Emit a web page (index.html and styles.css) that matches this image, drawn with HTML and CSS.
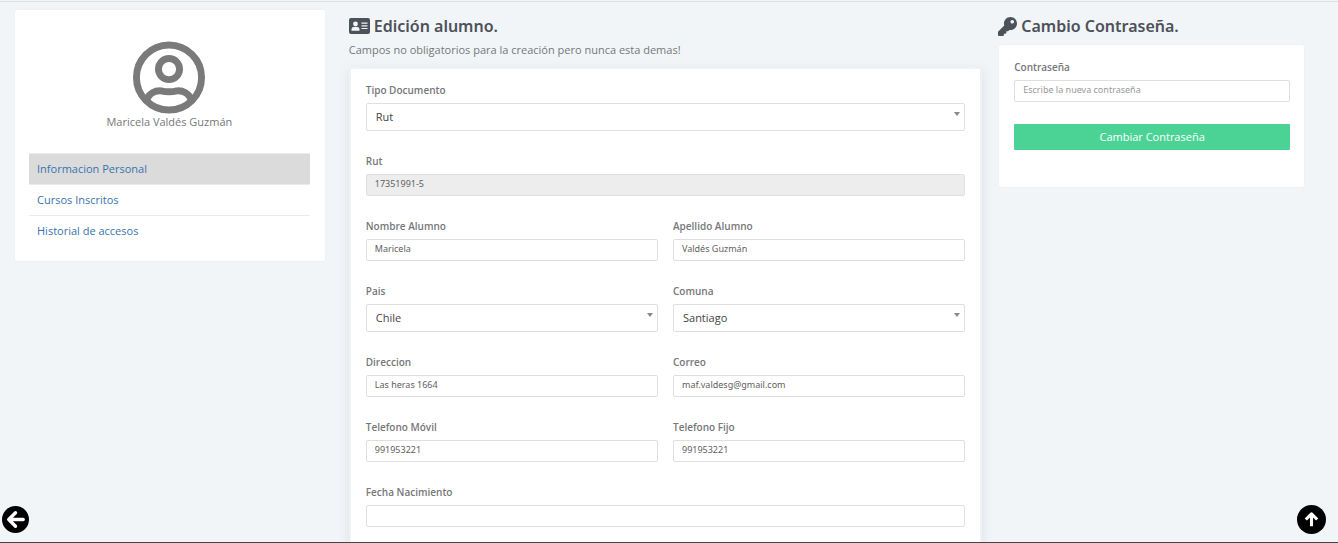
FILE: index.html
```html
<!DOCTYPE html>
<html lang="es">
<head>
<meta charset="utf-8">
<meta name="viewport" content="width=device-width, initial-scale=1">
<title>Edición alumno</title>
<link rel="stylesheet" href="styles.css">
</head>
<body>
<div class="topline"></div>
<main class="layout">
  <aside class="panel profile">
    <svg class="avatar" viewBox="0 0 74 74" fill="none" stroke="#7a7a7a" stroke-width="7" aria-hidden="true">
      <circle cx="37" cy="37" r="33"/>
      <circle cx="37" cy="28.500" r="10.700"/>
      <path d="M14 60C17 53 23 50 29 50.500C33 51.500 41 51.500 45 50.500C51 50 57 53 60 60"/>
    </svg>
    <p class="name">Maricela Valdés Guzmán</p>
    <nav class="menu">
      <a class="menu-item active" href="#">Informacion Personal</a>
      <a class="menu-item" href="#">Cursos Inscritos</a>
      <a class="menu-item" href="#">Historial de accesos</a>
    </nav>
  </aside>

  <section class="edit">
    <h1 class="title">
      <svg class="icon-card" viewBox="0 0 21 16" aria-hidden="true">
        <path fill="#4d5158" d="M2 0H19Q21 0 21 2V14Q21 16 19 16H2Q0 16 0 14V2Q0 0 2 0Z"/>
        <g fill="#f1f5f8"><circle cx="6.500" cy="6" r="2.400"/><path d="M2.500 12.700V11.300Q2.500 9 4.800 9H8.200Q10.500 9 10.500 11.300V12.700ZM12.500 4.500H18.500V5.700H12.500ZM12.500 7.200H18.500V8.400H12.500ZM12.500 9.900H18.500V11.100H12.500Z"/></g>
      </svg>
      Edición alumno.
    </h1>
    <p class="subtitle">Campos no obligatorios para la creación pero nunca esta demas!</p>
    <form class="panel form">
      <div class="field wide">
        <label for="tipo">Tipo Documento</label>
        <div class="select"><select id="tipo"><option>Rut</option></select></div>
      </div>
      <div class="field wide">
        <label for="rut">Rut</label>
        <input id="rut" type="text" value="17351991-5" readonly>
      </div>
      <div class="field">
        <label for="nombre">Nombre Alumno</label>
        <input id="nombre" type="text" value="Maricela">
      </div>
      <div class="field">
        <label for="apellido">Apellido Alumno</label>
        <input id="apellido" type="text" value="Valdés Guzmán">
      </div>
      <div class="field">
        <label for="pais">Pais</label>
        <div class="select"><select id="pais"><option>Chile</option></select></div>
      </div>
      <div class="field">
        <label for="comuna">Comuna</label>
        <div class="select"><select id="comuna"><option>Santiago</option></select></div>
      </div>
      <div class="field">
        <label for="direccion">Direccion</label>
        <input id="direccion" type="text" value="Las heras 1664">
      </div>
      <div class="field">
        <label for="correo">Correo</label>
        <input id="correo" type="email" value="maf.valdesg@gmail.com">
      </div>
      <div class="field">
        <label for="movil">Telefono Móvil</label>
        <input id="movil" type="tel" value="991953221">
      </div>
      <div class="field">
        <label for="fijo">Telefono Fijo</label>
        <input id="fijo" type="tel" value="991953221">
      </div>
      <div class="field wide">
        <label for="fecha">Fecha Nacimiento</label>
        <input id="fecha" type="text">
      </div>
    </form>
  </section>

  <section class="password">
    <h2 class="title">
      <svg class="icon-key" viewBox="0 0 512 512" aria-hidden="true">
        <path fill="#4d5158" d="M512 176.001C512 273.203 433.202 352 336 352c-11.220 0-22.190-1.062-32.827-3.069l-24.012 27.014A23.999 23.999 0 0 1 261.223 384H224v40c0 13.255-10.745 24-24 24h-40v40c0 13.255-10.745 24-24 24H24c-13.255 0-24-10.745-24-24v-78.059c0-6.365 2.529-12.470 7.029-16.971l161.802-161.802C163.108 213.814 160 195.271 160 176 160 78.798 238.797.001 335.999 0 433.488-.001 512 78.511 512 176.001zM336 128c0 26.510 21.490 48 48 48s48-21.490 48-48-21.490-48-48-48-48 21.490-48 48z"/>
      </svg>
      Cambio Contraseña.
    </h2>
    <form class="panel pass-form">
      <div class="field">
        <label for="clave">Contraseña</label>
        <input id="clave" type="password" placeholder="Escribe la nueva contraseña">
      </div>
      <button class="submit" type="button">Cambiar Contraseña</button>
    </form>
  </section>
</main>

<button class="round back" type="button" aria-label="Volver">
  <svg viewBox="0 0 28 28" fill="none" stroke="#fff" stroke-width="3.500" stroke-linecap="round" stroke-linejoin="round" aria-hidden="true"><path d="M22 14H7M14 7L7 14L14 21"/></svg>
</button>
<button class="round up" type="button" aria-label="Subir">
  <svg viewBox="0 0 28 28" fill="none" stroke="#fff" stroke-width="3" stroke-linejoin="round" aria-hidden="true"><path d="M14 20.500V9M8.500 14L14 8.500L19.500 14"/></svg>
</button>
<div class="bottomline"></div>
</body>
</html>
```
FILE: styles.css
```css
* { box-sizing: border-box; }

body {
  margin: 0;
  min-height: 100vh;
  display: flex;
  flex-direction: column;
  background: #f1f5f8;
  color: #76777a;
  font-family: "Open Sans", "Noto Sans", sans-serif;
  font-size: 11px;
  line-height: 16px;
}

h1, h2, p { margin: 0; }

input, select, button { font-family: inherit; }

.topline {
  height: 2px;
  background: #f2f2f2;
  border-bottom: 1px solid #dfe0e1;
}

.layout {
  flex: 1;
  display: grid;
  grid-template-columns: 312fr 641fr 307fr;
  column-gap: 16px;
  padding: 7px 33px 0 14px;
}

.panel {
  background: #fff;
  border: 1px solid #f1f1f1;
  border-radius: 3px;
}

.profile {
  align-self: start;
  display: flex;
  flex-direction: column;
  align-items: center;
  padding: 31px 15px 15px 14px;
}

.avatar { width: 74px; height: 73px; }

.name { margin-bottom: 23px; }

.menu {
  align-self: stretch;
  display: flex;
  flex-direction: column;
}

.menu-item {
  padding: 7px 8px;
  border-top: 1px solid #ebebeb;
  color: #3973ac;
  text-decoration: none;
}

.active { background: #dbdbdb; }

.edit {
  display: flex;
  flex-direction: column;
  padding-left: 7px;
}

.title {
  display: flex;
  align-items: center;
  gap: 4px;
  padding-top: 5px;
  color: #4d5158;
  font-family: "Noto Sans", "Open Sans", sans-serif;
  font-size: 16px;
  font-weight: 600;
  line-height: 24px;
}

.icon-card { width: 21px; height: 16px; }

.icon-key { width: 19px; height: 19px; }

.subtitle {
  padding-top: 4px;
  padding-bottom: 9px;
}

.form {
  flex: 1;
  display: grid;
  grid-template-columns: 1fr 1fr;
  align-content: start;
  gap: 22px 15px;
  padding: 13px 15px 16px;
  border-width: 2px 2px 0;
  border-radius: 3px 3px 0 0;
  box-shadow: 0 3px 12px rgba(60, 80, 100, 0.12);
}

.field {
  display: flex;
  flex-direction: column;
  gap: 5px;
}

.wide { grid-column: 1 / -1; }

label {
  font-size: 10px;
  font-weight: 600;
}

input, select {
  width: 100%;
  border: 1px solid #dfdfdf;
  border-radius: 2px;
  background: #fff;
}

input {
  height: 22px;
  padding: 0 8px 3px;
  color: #5f6063;
  font-family: "Noto Sans", "Open Sans", sans-serif;
  font-size: 9px;
}

input:read-only { background: #ededed; }

input::placeholder { color: #999; }

.select {
  display: grid;
  position: relative;
}

.select::after {
  content: "";
  position: absolute;
  right: 5px;
  top: 9px;
  border: solid transparent;
  border-width: 4px 3px 0;
  border-top-color: #888;
}

select {
  height: 28px;
  padding: 0 9px 2px;
  appearance: none;
  color: #444;
  font-size: 11px;
}

.pass-form {
  display: flex;
  flex-direction: column;
  gap: 22px;
  margin-top: 6px;
  padding: 14px 14px 37px 15px;
}

.submit {
  height: 26px;
  padding: 0 8px 2px;
  border: 0;
  border-radius: 1px;
  background: #4bd396;
  color: #fff;
  font-size: 11px;
}

.round {
  position: fixed;
  padding: 0;
  border: 0;
  border-radius: 50%;
  background: #000;
}

.round svg {
  display: block;
  width: 100%;
}

.back {
  left: 2px;
  bottom: 10px;
  width: 27px;
  height: 27px;
}

.up {
  right: 12px;
  bottom: 9px;
  width: 29px;
  height: 29px;
}

.bottomline {
  position: fixed;
  right: 0;
  bottom: 0;
  left: 0;
  height: 1px;
  background: #444;
}
```
